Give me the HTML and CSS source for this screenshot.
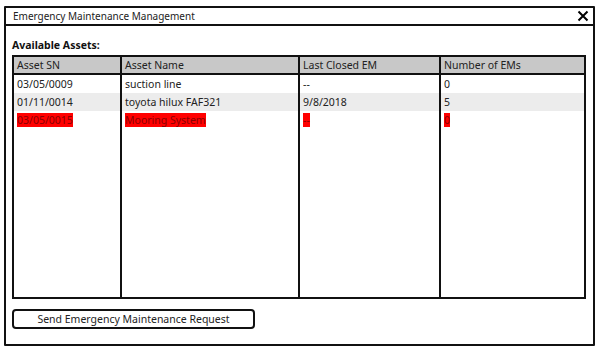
FILE: index.html
```html
<!doctype html>
<html lang="en">
    <head>
        <meta charset="UTF-8" />
        <title>Emergency Maintenance Management</title>
        <link rel="stylesheet" href="styles.css">
    </head>
    <body>
        <div class="window">
            <div class="titleBar">
                <span class="title">Emergency Maintenance Management</span>
                <svg class="close" width="12" height="12" viewBox="0 0 12 12">
                    <path d="M1.5 1.5 L10.5 10.5 M10.5 1.5 L1.5 10.5" stroke="#000" stroke-width="2" fill="none" />
                </svg>
            </div>
            <div class="content">
                <h2>Available Assets:</h2>
                <div class="assets">
                    <table>
                        <colgroup>
                            <col class="colSn" />
                            <col class="colName" />
                            <col class="colClosed" />
                            <col />
                        </colgroup>
                        <thead>
                            <tr>
                                <th>Asset SN</th>
                                <th>Asset Name</th>
                                <th>Last Closed EM</th>
                                <th>Number of EMs</th>
                            </tr>
                        </thead>
                        <tbody>
                            <tr>
                                <td>03/05/0009</td>
                                <td>suction line</td>
                                <td>--</td>
                                <td>0</td>
                            </tr>
                            <tr class="alt">
                                <td>01/11/0014</td>
                                <td>toyota hilux FAF321</td>
                                <td>9/8/2018</td>
                                <td>5</td>
                            </tr>
                            <tr class="flagged">
                                <td><span>03/05/0015</span></td>
                                <td><span>Mooring System</span></td>
                                <td><span>--</span></td>
                                <td><span>0</span></td>
                            </tr>
                            <tr class="filler">
                                <td></td>
                                <td></td>
                                <td></td>
                                <td></td>
                            </tr>
                        </tbody>
                    </table>
                </div>
                <button>Send Emergency Maintenance Request</button>
            </div>
        </div>
    </body>
</html>
```

FILE: styles.css
```css
body {
    margin: 0;
    background: #fff;
    font-family: "Noto Sans", "Open Sans", sans-serif;
    font-size: 10.5px;
    color: #222;
}
.window {
    margin: 6px 0 0 4px;
    width: 587px;
    height: 336px;
    border: 2px solid #111;
    border-radius: 1px;
    display: flex;
    flex-direction: column;
}
.titleBar {
    height: 16px;
    border-bottom: 2px solid #111;
    display: flex;
    align-items: center;
    justify-content: space-between;
    padding: 0 4px 0 7px;
}
.title {
    line-height: 16px;
    font-size: 10px;
}
.content {
    flex: 1;
    display: flex;
    flex-direction: column;
    padding: 12px 6px 10px 6px;
}
h2 {
    margin: 0 0 3px 0;
    font-size: 10.5px;
    font-weight: bold;
    line-height: 14px;
    color: #111;
}
.assets {
    height: 244px;
    width: 574px;
    border: 2px solid #111;
    box-sizing: border-box;
}
table {
    width: 100%;
    height: 100%;
    border-collapse: collapse;
    table-layout: fixed;
}
.colSn {
    width: 107px;
}
.colName {
    width: 178px;
}
.colClosed {
    width: 141px;
}
th,
td {
    text-align: left;
    font-weight: normal;
    padding: 0 3px;
    height: 18px;
    line-height: 14px;
    border-left: 2px solid #111;
    vertical-align: middle;
    white-space: nowrap;
    overflow: hidden;
}
th:first-child,
td:first-child {
    border-left: none;
}
th {
    background: #c8c8c8;
    border-bottom: 2px solid #111;
    height: 16px;
}
.alt td {
    background: #ececec;
}
.flagged span {
    background: #ff0000;
    color: #8a0000;
}
.filler td {
    height: auto;
}
button {
    margin-top: 10px;
    width: 243px;
    height: 20px;
    border: 2px solid #111;
    border-radius: 4px;
    background: #fff;
    font-family: inherit;
    font-size: 10.5px;
    color: #222;
    padding: 0;
    text-align: center;
}
```
